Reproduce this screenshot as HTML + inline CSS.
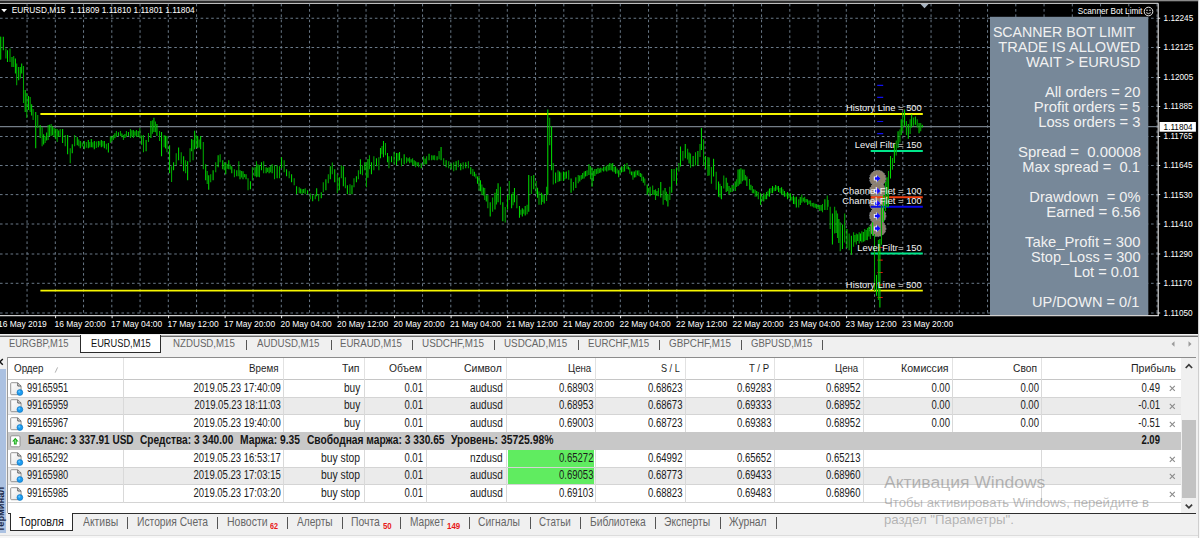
<!DOCTYPE html><html><head><meta charset="utf-8"><title>EURUSD,M15</title><style>
html,body{margin:0;padding:0}
body{width:1200px;height:538px;overflow:hidden;position:relative;background:#f0f0f0;font-family:"Liberation Sans",sans-serif}
.t{position:absolute;white-space:pre;line-height:1;display:block}
.b{position:absolute;display:block}
</style></head><body>
<svg width="1200" height="335" viewBox="0 0 1200 335" style="position:absolute;left:0;top:0;display:block" font-family='"Liberation Sans",sans-serif'>
<rect x="0" y="0" width="1200" height="335" fill="#000"/>
<rect x="0" y="0" width="1198" height="1.3" fill="#8a8a8a"/>
<path d="M0 3.3H1158.2" stroke="#bdbdbd" stroke-width="1.3"/>
<path d="M27.05 3.8V315.6M55.30 3.8V315.6M83.55 3.8V315.6M111.80 3.8V315.6M140.05 3.8V315.6M168.30 3.8V315.6M196.55 3.8V315.6M224.80 3.8V315.6M253.05 3.8V315.6M281.30 3.8V315.6M309.55 3.8V315.6M337.80 3.8V315.6M366.05 3.8V315.6M394.30 3.8V315.6M422.55 3.8V315.6M450.80 3.8V315.6M479.05 3.8V315.6M507.30 3.8V315.6M535.55 3.8V315.6M563.80 3.8V315.6M592.05 3.8V315.6M620.30 3.8V315.6M648.55 3.8V315.6M676.80 3.8V315.6M705.05 3.8V315.6M733.30 3.8V315.6M761.55 3.8V315.6M789.80 3.8V315.6M818.05 3.8V315.6M846.30 3.8V315.6M874.55 3.8V315.6M902.80 3.8V315.6M931.05 3.8V315.6M959.30 3.8V315.6M987.55 3.8V315.6M1015.80 3.8V315.6M1044.05 3.8V315.6M1072.30 3.8V315.6M1100.55 3.8V315.6M1128.80 3.8V315.6M1157.05 3.8V315.6M0 18.25H1158.2M0 47.50H1158.2M0 77.50H1158.2M0 106.50H1158.2M0 136.50H1158.2M0 165.50H1158.2M0 194.60H1158.2M0 224.00H1158.2M0 254.00H1158.2M0 283.30H1158.2M0 313.00H1158.2" stroke="#70808f" stroke-width="0.95" stroke-dasharray="2.6 2.68" fill="none"/>
<path d="M0 126.6H1158.2" stroke="#747e88" stroke-width="1.1"/>
<circle cx="877.7" cy="178.50" r="8.2" fill="#8c7f6e" stroke="#8893a0" stroke-width="0.8" stroke-dasharray="1.7 1.1"/>
<circle cx="877.7" cy="190.95" r="8.2" fill="#8c7f6e" stroke="#8893a0" stroke-width="0.8" stroke-dasharray="1.7 1.1"/>
<circle cx="877.7" cy="203.40" r="8.2" fill="#8c7f6e" stroke="#8893a0" stroke-width="0.8" stroke-dasharray="1.7 1.1"/>
<circle cx="877.7" cy="215.90" r="8.2" fill="#8c7f6e" stroke="#8893a0" stroke-width="0.8" stroke-dasharray="1.7 1.1"/>
<circle cx="877.7" cy="228.40" r="8.2" fill="#8c7f6e" stroke="#8893a0" stroke-width="0.8" stroke-dasharray="1.7 1.1"/>
<path d="M873.8 176.5H876.4V174.5L880.3 178.5L876.4 182.5V180.5H873.8z" fill="#f4f4ff"/>
<path d="M874.9 177.2H877.1V175.2L880.5 178.5L877.1 181.8V179.8H874.9z" fill="#0a0aff"/>
<path d="M873.8 188.9H876.4V186.9L880.3 190.9L876.4 194.9V192.9H873.8z" fill="#f4f4ff"/>
<path d="M874.9 189.7H877.1V187.6L880.5 190.9L877.1 194.3V192.2H874.9z" fill="#0a0aff"/>
<path d="M873.8 201.4H876.4V199.4L880.3 203.4L876.4 207.4V205.4H873.8z" fill="#f4f4ff"/>
<path d="M874.9 202.2H877.1V200.1L880.5 203.4L877.1 206.8V204.7H874.9z" fill="#0a0aff"/>
<path d="M873.8 213.9H876.4V211.9L880.3 215.9L876.4 219.9V217.9H873.8z" fill="#f4f4ff"/>
<path d="M874.9 214.7H877.1V212.6L880.5 215.9L877.1 219.2V217.2H874.9z" fill="#0a0aff"/>
<path d="M873.8 226.4H876.4V224.4L880.3 228.4L876.4 232.4V230.4H873.8z" fill="#f4f4ff"/>
<path d="M874.9 227.2H877.1V225.1L880.5 228.4L877.1 231.8V229.7H874.9z" fill="#0a0aff"/>
<path d="M40.4 114H922.8M40.4 290.6H922.8" stroke="#f5f500" stroke-width="1.8"/>
<path d="M870.7 151H922.8M870.7 253.5H922.8" stroke="#00e68a" stroke-width="2"/>
<path d="M870.7 197.3H922.8" stroke="#f04010" stroke-width="2"/>
<path d="M870.7 206.8H922.8" stroke="#0808e8" stroke-width="2"/>
<path d="M877.2 85.4h6M877.2 97.3h6M877.2 121.5h6M877.2 133.6h6" stroke="#1010f0" stroke-width="1.2"/>
<path d="M877.5 247.5h5.2M877.5 260.2h5.2M877.5 272.5h5.2M877.5 284.8h5.2M877.5 297.5h5.2" stroke="#e01010" stroke-width="1.2"/>
<path d="M0.40 36.8V59.4M3.30 36.8V50.2M7.50 50.2V61.9M12.00 56.9V66.9M15.40 58.5V73.6M18.70 66.9V80.3M21.70 63.5V73.6M25.20 90.0V112.0M28.50 96.0V110.0M31.66 104.3V115.4M35.72 112.0V148.2M40.14 125.1V138.1M43.65 134.2V144.4M46.66 132.4V140.4M49.67 124.8V136.1M52.68 126.2V135.3M55.69 128.8V139.3M58.70 130.4V137.0M62.61 129.1V143.1M67.63 135.1V154.2M72.25 144.2V153.2M77.26 137.1V145.2M80.27 141.1V148.2M84.29 141.1V149.2M88.30 140.1V148.2M91.31 139.1V147.2M94.32 141.1V149.2M98.33 141.1V147.2M101.34 140.1V147.2M104.35 141.1V148.2M108.37 143.1V152.6M111.88 136.6V141.5M114.89 133.2V138.3M118.40 132.2V135.9M121.91 133.6V137.2M124.92 133.9V138.1M128.44 131.9V136.0M131.95 130.2V136.7M134.96 131.3V135.7M138.17 131.0V136.9M141.68 135.6V144.7M146.10 140.1V151.2M150.91 121.1V138.1M153.92 117.7V132.1M156.93 124.1V136.1M161.55 132.1V156.2M165.56 135.7V148.5M169.58 145.2V173.2M173.59 162.2V170.2M178.61 147.6V160.2M183.62 156.2V171.2M187.64 161.2V180.3M191.65 139.1V151.2M194.66 130.7V149.2M197.67 136.1V148.2M200.68 136.1V149.2M205.70 164.2V180.3M208.71 175.3V189.7M213.12 170.2V180.3M218.14 155.2V167.2M222.76 160.2V169.2M225.77 162.2V174.3M228.78 160.2V169.2M231.79 166.2V173.2M236.81 170.2V176.3M240.00 170.2V179.2M243.01 171.2V179.2M246.02 174.2V179.2M250.44 181.2V189.3M255.05 167.2V176.2M257.96 164.6V176.7M261.47 162.2V170.2M266.09 167.2V173.2M269.10 167.2V173.2M272.11 164.2V173.2M277.13 165.2V178.2M281.54 157.2V168.2M286.56 169.2V176.2M291.58 174.2V182.2M296.59 186.3V194.3M300.71 188.5V193.6M303.72 188.9V193.0M307.63 190.3V194.3M312.65 195.3V201.3M316.66 188.3V196.3M321.28 192.3V198.3M325.89 179.2V190.3M330.31 166.2V179.2M334.72 169.2V182.2M339.34 177.2V190.3M343.35 166.2V186.3M347.37 185.3V194.3M351.98 185.3V194.3M356.40 176.2V182.2M360.41 159.2V174.2M364.82 162.2V170.2M367.93 159.0V177.7M371.45 162.2V174.2M376.46 158.2V166.2M380.48 148.1V158.2M383.49 141.1V157.2M387.50 153.1V162.2M391.52 156.2V162.2M396.53 153.1V165.2M399.54 152.1V160.2M404.16 154.2V164.2M408.07 158.2V161.6M411.08 159.3V162.5M414.09 160.2V165.4M417.10 162.3V165.7M421.22 163.2V168.2M425.13 158.6V164.3M429.04 153.7V160.2M433.16 155.4V159.8M437.07 156.2V160.2M441.08 147.1V160.2M446.10 160.2V167.2M451.12 163.2V169.2M456.13 161.2V170.2M460.75 163.2V170.2M465.77 162.2V168.2M470.78 167.2V174.2M474.40 171.8V176.4M477.49 176.6V183.7M480.47 180.3V191.2M483.32 187.5V195.6M486.29 195.2V201.5M490.22 202.3V216.6M494.98 192.8V209.4M498.07 183.3V202.3M502.83 202.3V221.3M507.58 195.1V209.4M511.63 194.0V208.2M514.48 188.0V202.3M519.48 205.9V217.7M522.33 208.2V216.6M525.19 205.9V215.4M528.75 174.9V211.8M533.75 174.9V189.2M537.55 187.8V197.7M541.36 192.8V204.7M544.22 195.1V203.5M547.78 109.5V195.1M551.59 126.2V170.2M555.63 172.5V183.3M559.44 171.5V181.3M563.48 171.4V180.9M566.34 171.4V178.5M571.09 178.5V192.8M575.85 177.3V188.0M579.78 175.6V181.4M582.75 173.1V178.8M585.60 171.0V176.6M588.93 164.2V174.9M592.03 167.8V186.8M594.88 169.0V176.1M597.97 167.8V173.7M600.83 167.8V172.5M603.68 166.6V171.4M606.77 165.4V171.4M609.87 163.0V170.2M612.72 163.0V171.4M615.58 166.6V173.7M618.67 170.2V177.3M621.52 166.6V172.5M624.61 164.2V171.4M628.42 166.4V169.6M631.39 171.4V175.2M634.37 171.4V177.6M637.34 170.5V175.2M640.31 173.0V177.0M643.29 176.8V182.8M647.21 184.4V195.1M650.07 186.8V196.3M654.11 190.0V195.1M656.96 190.9V196.0M660.77 182.1V197.5M665.05 188.0V199.9M667.91 194.0V206.6M671.71 169.0V192.8M676.47 167.8V184.4M680.51 146.4V166.6M685.27 144.0V158.3M689.08 152.5V163.5M693.12 155.9V166.6M697.88 151.1V165.4M701.45 128.1V150.0M705.49 155.9V169.0M709.04 157.6V175.4M713.56 158.8V176.6M718.55 181.4V196.8M721.41 186.1V199.2M726.17 177.8V192.1M729.02 186.1V194.4M732.11 184.9V192.1M735.20 181.4V190.9M738.06 169.5V186.1M740.91 168.3V183.7M744.01 169.5V180.2M746.86 176.6V186.1M750.90 184.8V190.2M753.76 189.3V193.3M756.73 191.1V196.6M760.66 193.3V205.1M763.75 193.3V201.6M766.60 192.1V199.2M769.46 188.5V196.8M772.55 186.1V193.3M775.64 184.9V190.9M778.50 186.1V192.1M781.59 187.3V194.4M784.44 190.9V196.8M787.54 192.1V199.2M790.39 193.3V200.4M793.48 195.6V204.0M796.34 196.8V207.5M800.26 197.1V205.1M803.24 197.7V201.4M806.09 199.0V202.3M809.06 200.6V204.2M812.16 202.9V206.6M815.13 203.7V207.7M818.10 204.9V209.0M821.08 205.1V210.8M824.88 199.2V209.9M827.96 200.0V206.7M832.42 213.4V244.6M836.10 210.4V232.9M838.89 219.0V243.1M842.46 224.5V249.1M846.92 229.0V248.0M851.38 235.7V254.7M854.95 235.1V242.2M857.74 234.3V241.0M860.53 233.5V241.2M863.31 232.0V241.8M866.10 230.1V240.0M868.89 226.8V236.5M872.57 222.3V235.7M876.50 275.0V295.7M879.90 239.0V307.4M883.50 195.0V222.0M887.00 177.2V207.2M890.50 156.0V178.4M894.35 144.3V162.9M898.07 131.3V148.1M901.23 119.3V135.1M904.57 109.6V125.8M908.29 123.9V138.8M911.64 114.6V127.6M915.35 116.5V124.8M919.07 123.0V133.2M922.23 124.8V127.6" stroke="#00d800" stroke-width="1.05" fill="none"/>
<path d="M0.80 36.8V59.4M5.90 48.5V58.5M10.00 48.5V61.9M13.70 56.0V66.9M16.70 63.5V85.3M20.40 66.9V78.6M23.50 66.0V103.0M26.80 93.0V118.0M30.20 97.0V112.0M33.11 109.0V120.1M37.73 115.1V128.1M42.14 127.1V146.2M45.15 136.1V143.1M48.16 125.1V140.1M51.17 124.1V136.1M54.18 128.1V137.1M57.19 129.1V142.1M60.20 129.1V137.1M65.22 135.1V146.2M70.24 148.2V163.2M74.65 135.1V146.2M78.77 139.4V146.2M82.28 142.6V146.5M86.29 142.0V147.7M89.81 142.0V147.5M92.82 142.2V147.5M96.33 141.4V147.9M99.84 141.2V145.6M102.85 141.0V146.4M106.36 143.7V149.5M110.38 136.1V143.1M113.39 135.1V140.1M116.40 131.1V137.1M120.41 131.1V136.1M123.42 135.1V140.1M126.43 131.1V137.1M130.44 129.1V138.1M133.45 130.1V138.1M136.46 130.1V137.1M139.88 128.1V138.1M143.49 135.1V152.2M148.50 133.1V142.1M152.42 120.2V133.7M155.43 121.5V132.2M159.54 131.1V141.1M164.16 135.1V147.2M166.97 136.1V152.2M171.58 166.2V181.9M176.20 153.2V165.2M181.22 152.2V164.2M185.63 160.2V173.2M190.05 148.2V162.2M193.06 140.1V160.2M196.17 134.8V147.6M199.18 139.4V147.5M203.29 142.1V169.2M207.20 171.0V183.9M210.72 174.3V182.3M215.73 162.2V172.2M220.15 154.2V162.2M224.26 163.0V170.3M227.27 163.9V168.8M230.28 164.4V169.6M234.40 169.2V177.3M238.81 161.2V176.3M241.51 170.9V177.4M244.52 174.0V177.3M248.03 178.2V190.3M252.44 167.2V180.2M256.46 161.2V177.2M259.47 165.2V177.2M263.68 161.2V173.2M267.59 167.9V172.0M270.60 165.7V172.2M274.52 165.2V179.2M279.53 166.2V178.2M284.15 160.2V172.2M289.17 171.2V178.2M294.18 178.2V185.3M299.20 187.3V193.3M302.21 189.3V194.3M305.22 188.3V194.3M310.24 193.3V199.3M315.26 194.3V199.3M318.67 194.3V201.3M323.28 182.2V192.3M328.30 174.2V183.2M332.31 162.6V174.2M337.33 174.2V193.3M341.34 165.2V178.2M345.36 177.2V188.3M349.97 184.3V194.3M353.99 178.2V187.3M358.40 170.2V179.2M362.42 165.2V175.2M366.43 162.2V187.3M369.44 155.2V169.2M373.86 156.2V170.2M378.87 157.2V170.2M381.98 146.1V154.3M385.49 143.1V155.2M388.91 156.2V168.2M394.12 152.1V164.2M398.04 152.9V161.3M401.55 158.2V166.2M406.57 157.2V163.2M409.58 157.2V163.2M412.59 158.2V165.2M415.60 161.2V167.2M418.61 162.2V167.2M423.62 156.2V165.2M426.63 156.2V164.2M431.65 155.2V160.2M434.66 155.2V160.2M439.08 151.1V159.2M443.69 158.2V165.2M448.71 161.2V168.2M453.73 162.2V171.2M458.34 160.2V167.2M463.16 162.2V169.2M468.38 161.2V168.2M472.85 169.0V176.1M475.95 173.7V178.5M479.04 176.1V190.4M481.89 184.4V195.1M484.75 188.0V199.9M487.84 195.1V208.2M492.60 197.5V211.8M496.52 189.1V204.5M500.45 186.8V204.7M505.20 207.0V222.5M509.25 180.9V199.9M513.05 192.1V205.2M516.86 195.1V208.2M520.90 209.8V214.8M523.76 209.4V213.8M527.09 204.7V214.2M531.37 176.1V194.0M536.13 180.9V194.0M538.98 191.6V204.7M542.79 194.3V202.1M546.59 186.8V201.1M549.69 117.8V145.2M553.25 163.0V184.4M558.01 170.2V182.1M560.87 172.5V180.9M564.91 171.9V179.3M568.72 170.2V179.7M573.47 182.1V190.4M578.23 174.9V183.3M581.32 174.9V179.7M584.18 171.4V178.5M587.03 170.2V176.1M590.48 166.1V179.3M593.45 170.8V180.9M596.43 168.9V174.2M599.40 168.4V172.9M602.25 168.4V170.5M605.23 166.8V170.6M608.32 164.4V170.6M611.29 163.8V170.2M614.15 166.7V172.2M617.12 168.4V173.5M620.10 169.4V174.6M623.07 166.5V171.9M626.99 163.0V169.0M629.85 167.8V173.7M632.94 171.4V179.7M635.79 170.2V177.3M638.89 170.2V176.1M641.74 173.7V180.9M644.83 178.5V185.6M648.64 188.1V192.8M652.68 185.6V195.1M655.54 189.2V199.9M658.39 188.0V196.3M663.15 190.4V204.7M666.48 191.8V201.3M669.81 186.8V199.9M674.09 169.0V180.9M678.85 163.0V171.4M682.89 151.1V160.7M687.65 148.8V159.5M690.50 153.5V167.8M695.50 152.3V165.4M700.02 144.0V157.1M703.59 139.2V165.4M707.87 157.1V176.1M711.42 167.1V183.7M716.18 171.8V189.7M719.98 183.8V197.5M723.79 175.4V188.5M727.59 182.8V190.9M730.57 187.7V192.2M733.66 185.5V189.0M736.63 179.2V187.1M739.49 169.3V184.5M742.46 169.6V181.2M745.43 174.9V180.4M749.48 179.0V189.7M752.33 186.1V193.3M755.19 189.7V196.8M758.28 192.1V199.2M762.20 196.0V201.0M765.18 194.4V199.3M768.03 190.7V196.2M771.00 188.1V193.2M774.10 187.4V191.3M777.07 186.2V189.8M780.04 188.1V192.9M783.02 189.3V195.3M785.99 193.2V196.4M788.96 193.0V198.0M791.94 196.7V200.6M794.91 197.2V204.2M798.72 199.2V207.5M801.81 194.4V202.8M804.66 196.8V202.8M807.52 199.2V205.1M810.61 200.4V206.3M813.70 202.8V207.5M816.56 204.0V208.7M819.65 205.1V211.1M822.50 204.0V212.3M827.26 195.6V209.9M830.19 206.7V229.0M834.65 206.7V233.5M837.55 213.4V237.9M840.23 222.3V251.3M844.69 213.4V242.4M849.15 233.5V250.2M853.61 232.3V246.8M856.29 233.5V244.6M859.19 232.3V243.5M861.86 231.2V242.4M864.76 229.0V241.3M867.44 227.9V240.2M870.34 225.7V239.0M874.50 234.0V290.7M878.40 240.0V300.0M881.50 205.0V244.8M885.50 182.0V211.0M888.50 171.0V207.0M892.50 158.0V169.7M896.21 140.6V155.5M899.93 129.5V142.5M902.71 111.8V131.3M906.43 121.1V135.1M910.15 119.3V134.1M913.49 117.4V125.8M917.21 119.3V127.6M920.74 123.0V131.3" stroke="#00a800" stroke-width="1.05" fill="none"/>
<text x="921.80" y="110.90" font-size="9.4" text-anchor="end" fill="#f4f4f4" >History Line = 500</text>
<text x="921.80" y="148.00" font-size="9.4" text-anchor="end" fill="#f4f4f4" >Level Filtr = 150</text>
<text x="921.80" y="194.40" font-size="9.4" text-anchor="end" fill="#f4f4f4" >Channel Flet = 100</text>
<text x="921.80" y="203.50" font-size="9.4" text-anchor="end" fill="#f4f4f4" >Channel Flet = 100</text>
<text x="921.70" y="250.90" font-size="9.4" text-anchor="end" fill="#f4f4f4" >Level Filtr= 150</text>
<text x="921.70" y="287.70" font-size="9.4" text-anchor="end" fill="#f4f4f4" >History Line = 500</text>
<rect x="990" y="16.8" width="158.3" height="299" fill="#778899"/>
<text x="992.9" y="36.80" font-size="14.1" textLength="142.4" lengthAdjust="spacingAndGlyphs" fill="#f1f1f1" xml:space="preserve">SCANNER BOT LIMIT</text>
<text x="998.3" y="51.83" font-size="14.1" textLength="142.0" lengthAdjust="spacingAndGlyphs" fill="#f1f1f1" xml:space="preserve">TRADE IS ALLOWED</text>
<text x="1025.9" y="66.86" font-size="14.1" textLength="114.4" lengthAdjust="spacingAndGlyphs" fill="#f1f1f1" xml:space="preserve">WAIT &gt; EURUSD</text>
<text x="1044.9" y="96.92" font-size="14.1" textLength="95.5" lengthAdjust="spacingAndGlyphs" fill="#f1f1f1" xml:space="preserve">All orders = 20</text>
<text x="1033.8" y="111.95" font-size="14.1" textLength="106.6" lengthAdjust="spacingAndGlyphs" fill="#f1f1f1" xml:space="preserve">Profit orders = 5</text>
<text x="1038.2" y="126.98" font-size="14.1" textLength="102.2" lengthAdjust="spacingAndGlyphs" fill="#f1f1f1" xml:space="preserve">Loss orders = 3</text>
<text x="1018.0" y="157.04" font-size="14.1" textLength="123.1" lengthAdjust="spacingAndGlyphs" fill="#f1f1f1" xml:space="preserve">Spread =  0.00008</text>
<text x="1022.2" y="172.07" font-size="14.1" textLength="117.6" lengthAdjust="spacingAndGlyphs" fill="#f1f1f1" xml:space="preserve">Max spread =  0.1</text>
<text x="1029.3" y="202.13" font-size="14.1" textLength="111.2" lengthAdjust="spacingAndGlyphs" fill="#f1f1f1" xml:space="preserve">Drawdown  = 0%</text>
<text x="1046.2" y="217.16" font-size="14.1" textLength="94.3" lengthAdjust="spacingAndGlyphs" fill="#f1f1f1" xml:space="preserve">Earned = 6.56</text>
<text x="1025.1" y="247.22" font-size="14.1" textLength="115.4" lengthAdjust="spacingAndGlyphs" fill="#f1f1f1" xml:space="preserve">Take_Profit = 300</text>
<text x="1031.1" y="262.25" font-size="14.1" textLength="109.4" lengthAdjust="spacingAndGlyphs" fill="#f1f1f1" xml:space="preserve">Stop_Loss = 300</text>
<text x="1073.8" y="277.28" font-size="14.1" textLength="65.5" lengthAdjust="spacingAndGlyphs" fill="#f1f1f1" xml:space="preserve">Lot = 0.01</text>
<text x="1032.1" y="307.34" font-size="14.1" textLength="107.2" lengthAdjust="spacingAndGlyphs" fill="#f1f1f1" xml:space="preserve">UP/DOWN = 0/1</text>
<path d="M1158.2 3.3V316.1" stroke="#e8e8e8" stroke-width="1.1"/>
<path d="M0 315.6H1158.7" stroke="#cfcfcf" stroke-width="1.1"/>
<path d="M1158.2 18.25h2M1158.2 47.50h2M1158.2 77.50h2M1158.2 106.50h2M1158.2 136.50h2M1158.2 165.50h2M1158.2 194.60h2M1158.2 224.00h2M1158.2 254.00h2M1158.2 283.30h2M1158.2 313.00h2" stroke="#e8e8e8" stroke-width="1"/>
<text x="-2.00" y="326.90" font-size="8.45" text-anchor="start" fill="#fff" >16 May 2019</text>
<text x="54.50" y="326.90" font-size="8.45" text-anchor="start" fill="#fff" >16 May 20:00</text>
<text x="111.00" y="326.90" font-size="8.45" text-anchor="start" fill="#fff" >17 May 04:00</text>
<text x="167.50" y="326.90" font-size="8.45" text-anchor="start" fill="#fff" >17 May 12:00</text>
<text x="224.00" y="326.90" font-size="8.45" text-anchor="start" fill="#fff" >17 May 20:00</text>
<text x="280.50" y="326.90" font-size="8.45" text-anchor="start" fill="#fff" >20 May 04:00</text>
<text x="337.00" y="326.90" font-size="8.45" text-anchor="start" fill="#fff" >20 May 12:00</text>
<text x="393.50" y="326.90" font-size="8.45" text-anchor="start" fill="#fff" >20 May 20:00</text>
<text x="450.00" y="326.90" font-size="8.45" text-anchor="start" fill="#fff" >21 May 04:00</text>
<text x="506.50" y="326.90" font-size="8.45" text-anchor="start" fill="#fff" >21 May 12:00</text>
<text x="563.00" y="326.90" font-size="8.45" text-anchor="start" fill="#fff" >21 May 20:00</text>
<text x="619.50" y="326.90" font-size="8.45" text-anchor="start" fill="#fff" >22 May 04:00</text>
<text x="676.00" y="326.90" font-size="8.45" text-anchor="start" fill="#fff" >22 May 12:00</text>
<text x="732.50" y="326.90" font-size="8.45" text-anchor="start" fill="#fff" >22 May 20:00</text>
<text x="789.00" y="326.90" font-size="8.45" text-anchor="start" fill="#fff" >23 May 04:00</text>
<text x="845.50" y="326.90" font-size="8.45" text-anchor="start" fill="#fff" >23 May 12:00</text>
<text x="902.00" y="326.90" font-size="8.45" text-anchor="start" fill="#fff" >23 May 20:00</text>
<path d="M-0.90 315.6v2.6M55.60 315.6v2.6M112.10 315.6v2.6M168.60 315.6v2.6M225.10 315.6v2.6M281.60 315.6v2.6M338.10 315.6v2.6M394.60 315.6v2.6M451.10 315.6v2.6M507.60 315.6v2.6M564.10 315.6v2.6M620.60 315.6v2.6M677.10 315.6v2.6M733.60 315.6v2.6M790.10 315.6v2.6M846.60 315.6v2.6M903.10 315.6v2.6" stroke="#e8e8e8" stroke-width="1"/>
<text x="1163.60" y="21.20" font-size="8.2" text-anchor="start" fill="#fff" >1.12245</text>
<text x="1163.60" y="50.45" font-size="8.2" text-anchor="start" fill="#fff" >1.12125</text>
<text x="1163.60" y="80.45" font-size="8.2" text-anchor="start" fill="#fff" >1.12005</text>
<text x="1163.60" y="109.45" font-size="8.2" text-anchor="start" fill="#fff" >1.11885</text>
<text x="1163.60" y="139.45" font-size="8.2" text-anchor="start" fill="#fff" >1.11765</text>
<text x="1163.60" y="168.45" font-size="8.2" text-anchor="start" fill="#fff" >1.11645</text>
<text x="1163.60" y="197.55" font-size="8.2" text-anchor="start" fill="#fff" >1.11530</text>
<text x="1163.60" y="226.95" font-size="8.2" text-anchor="start" fill="#fff" >1.11410</text>
<text x="1163.60" y="256.95" font-size="8.2" text-anchor="start" fill="#fff" >1.11290</text>
<text x="1163.60" y="286.25" font-size="8.2" text-anchor="start" fill="#fff" >1.11170</text>
<text x="1163.60" y="315.95" font-size="8.2" text-anchor="start" fill="#fff" >1.11050</text>
<rect x="1159.5" y="122" width="36.4" height="9.7" fill="#fff"/>
<text x="1163.60" y="129.60" font-size="8.2" text-anchor="start" fill="#000" >1.11804</text>
<path d="M1.2 8.9h5.8l-2.9 3.4z" fill="#fff"/>
<text x="11.8" y="12.7" font-size="8.32" fill="#fff" xml:space="preserve">EURUSD,M15  1.11809 1.11810 1.11801 1.11804</text>
<text x="1142.40" y="13.70" font-size="8.2" text-anchor="end" fill="#fff" >Scanner Bot Limit</text>
<circle cx="1148.5" cy="11.5" r="4.3" fill="none" stroke="#fff" stroke-width="0.9"/>
<circle cx="1147" cy="10.3" r="0.7" fill="#fff"/><circle cx="1150" cy="10.3" r="0.7" fill="#fff"/>
<path d="M1146.2 12.6q2.3 2.2 4.6 0" stroke="#fff" stroke-width="0.8" fill="none"/>
<path d="M920.5 4h8l-4 4.2z" fill="#a8b4c0"/>
</svg>
<svg width="0" height="0" style="position:absolute"><defs><linearGradient id="pg" x1="0" y1="0" x2="1" y2="1"><stop offset="0" stop-color="#fff"/><stop offset="1" stop-color="#e2e2e2"/></linearGradient></defs></svg>
<div class="b" style="left:0;top:333.8px;width:1200px;height:1.4px;background:#f2f2f2"></div>
<div class="b" style="left:0;top:335px;width:1200px;height:1px;background:#bcbcbc"></div>
<div class="b" style="left:0;top:336px;width:1200px;height:1px;background:#6c6c6c"></div>
<div class="b" style="left:0;top:337px;width:1200px;height:20.6px;background:#f0f0f0"></div>
<div class="b" style="left:80.2px;top:335px;width:79.2px;height:16.6px;background:#fff;border:1.3px solid #2c2c2c;border-top:none;box-sizing:content-box"></div>
<span class="t" style="left:9.30px;top:337.10px;font-size:11.7px;color:#666;font-weight:400;transform-origin:0 0;transform:scaleX(0.8044);">EURGBP,M15</span>
<span class="t" style="left:90.80px;top:337.10px;font-size:11.7px;color:#111;font-weight:400;transform-origin:0 0;transform:scaleX(0.7924);">EURUSD,M15</span>
<span class="t" style="left:172.80px;top:337.10px;font-size:11.7px;color:#666;font-weight:400;transform-origin:0 0;transform:scaleX(0.8288);">NZDUSD,M15</span>
<span class="t" style="left:257.30px;top:337.10px;font-size:11.7px;color:#666;font-weight:400;transform-origin:0 0;transform:scaleX(0.8282);">AUDUSD,M15</span>
<span class="t" style="left:340.30px;top:337.10px;font-size:11.7px;color:#666;font-weight:400;transform-origin:0 0;transform:scaleX(0.8216);">EURAUD,M15</span>
<span class="t" style="left:421.50px;top:337.10px;font-size:11.7px;color:#666;font-weight:400;transform-origin:0 0;transform:scaleX(0.8448);">USDCHF,M15</span>
<span class="t" style="left:504.30px;top:337.10px;font-size:11.7px;color:#666;font-weight:400;transform-origin:0 0;transform:scaleX(0.8401);">USDCAD,M15</span>
<span class="t" style="left:588.20px;top:337.10px;font-size:11.7px;color:#666;font-weight:400;transform-origin:0 0;transform:scaleX(0.8325);">EURCHF,M15</span>
<span class="t" style="left:669.00px;top:337.10px;font-size:11.7px;color:#666;font-weight:400;transform-origin:0 0;transform:scaleX(0.8448);">GBPCHF,M15</span>
<span class="t" style="left:750.70px;top:337.10px;font-size:11.7px;color:#666;font-weight:400;transform-origin:0 0;transform:scaleX(0.8149);">GBPUSD,M15</span>
<div class="b" style="left:246.25px;top:339.5px;width:1px;height:10.5px;background:#555"></div>
<div class="b" style="left:330.75px;top:339.5px;width:1px;height:10.5px;background:#555"></div>
<div class="b" style="left:412.00px;top:339.5px;width:1px;height:10.5px;background:#555"></div>
<div class="b" style="left:493.60px;top:339.5px;width:1px;height:10.5px;background:#555"></div>
<div class="b" style="left:578.20px;top:339.5px;width:1px;height:10.5px;background:#555"></div>
<div class="b" style="left:659.30px;top:339.5px;width:1px;height:10.5px;background:#555"></div>
<div class="b" style="left:741.00px;top:339.5px;width:1px;height:10.5px;background:#555"></div>
<div class="b" style="left:821.80px;top:339.5px;width:1px;height:10.5px;background:#555"></div>
<svg class="b" style="left:1165px;top:338px" width="32" height="12"><path d="M9.5 3.2v5.6l-3-2.8z" fill="#9a9a9a"/><path d="M23.5 3.2v5.6l3-2.8z" fill="#9a9a9a"/></svg>
<div class="b" style="left:0;top:357px;width:6px;height:12.5px;background:#f0f0f0"></div>
<div class="b" style="left:0;top:369.4px;width:6.1px;height:163.4px;background:#abc1e1"></div>
<svg class="b" style="left:0;top:356px" width="6" height="12"><path d="M-3 2.9L2.8 8.7M-3 8.7L2.8 2.9" stroke="#111" stroke-width="1.4" fill="none"/></svg>
<span class="t" style="left:-2.6px;top:531.6px;font-size:9.3px;font-weight:700;color:#1c2a4a;transform-origin:0 0;transform:rotate(-90deg)">Терминал</span>
<div class="b" style="left:7.5px;top:357.4px;width:1188.8px;height:155.9px;background:#fff"></div>
<div class="b" style="left:7.5px;top:357.0px;width:1188.8px;height:1px;background:#8c8c8c"></div>
<div class="b" style="left:7.1px;top:357.4px;width:1px;height:155.9px;background:#9a9a9a"></div>
<div class="b" style="left:8.1px;top:379.4px;width:1173.2px;height:17.6px;background:#fff"></div>
<div class="b" style="left:8.1px;top:397.0px;width:1173.2px;height:17.5px;background:#ebebeb"></div>
<div class="b" style="left:8.1px;top:414.5px;width:1173.2px;height:17.5px;background:#fff"></div>
<div class="b" style="left:8.1px;top:432.0px;width:1173.2px;height:17.5px;background:#c8c8c8"></div>
<div class="b" style="left:8.1px;top:449.5px;width:1173.2px;height:17.5px;background:#fff"></div>
<div class="b" style="left:8.1px;top:467.0px;width:1173.2px;height:17.9px;background:#ebebeb"></div>
<div class="b" style="left:8.1px;top:484.9px;width:1173.2px;height:17.6px;background:#fff"></div>
<div class="b" style="left:508.2px;top:450.1px;width:85.6px;height:16.7px;background:#60ec60"></div>
<div class="b" style="left:508.2px;top:467.6px;width:85.6px;height:17.1px;background:#60ec60"></div>
<div class="b" style="left:8.1px;top:378.9px;width:1173.2px;height:1px;background:#c6c6c6"></div>
<div class="b" style="left:8.1px;top:396.5px;width:1173.2px;height:1px;background:#d4d4d4"></div>
<div class="b" style="left:8.1px;top:414.0px;width:1173.2px;height:1px;background:#d4d4d4"></div>
<div class="b" style="left:8.1px;top:466.5px;width:1173.2px;height:1px;background:#d4d4d4"></div>
<div class="b" style="left:8.1px;top:484.4px;width:1173.2px;height:1px;background:#d4d4d4"></div>
<div class="b" style="left:8.1px;top:502.0px;width:1173.2px;height:1px;background:#d4d4d4"></div>
<div class="b" style="left:122.50px;top:358.0px;width:1px;height:21.4px;background:#e2e2e2"></div>
<div class="b" style="left:122.50px;top:379.4px;width:1px;height:52.6px;background:#d9d9d9"></div>
<div class="b" style="left:122.50px;top:449.5px;width:1px;height:53.0px;background:#d9d9d9"></div>
<div class="b" style="left:282.75px;top:358.0px;width:1px;height:21.4px;background:#e2e2e2"></div>
<div class="b" style="left:282.75px;top:379.4px;width:1px;height:52.6px;background:#d9d9d9"></div>
<div class="b" style="left:282.75px;top:449.5px;width:1px;height:53.0px;background:#d9d9d9"></div>
<div class="b" style="left:363.75px;top:358.0px;width:1px;height:21.4px;background:#e2e2e2"></div>
<div class="b" style="left:363.75px;top:379.4px;width:1px;height:52.6px;background:#d9d9d9"></div>
<div class="b" style="left:363.75px;top:449.5px;width:1px;height:53.0px;background:#d9d9d9"></div>
<div class="b" style="left:425.75px;top:358.0px;width:1px;height:21.4px;background:#e2e2e2"></div>
<div class="b" style="left:425.75px;top:379.4px;width:1px;height:52.6px;background:#d9d9d9"></div>
<div class="b" style="left:425.75px;top:449.5px;width:1px;height:53.0px;background:#d9d9d9"></div>
<div class="b" style="left:505.80px;top:358.0px;width:1px;height:21.4px;background:#e2e2e2"></div>
<div class="b" style="left:505.80px;top:379.4px;width:1px;height:52.6px;background:#d9d9d9"></div>
<div class="b" style="left:505.80px;top:449.5px;width:1px;height:53.0px;background:#d9d9d9"></div>
<div class="b" style="left:595.25px;top:358.0px;width:1px;height:21.4px;background:#e2e2e2"></div>
<div class="b" style="left:595.25px;top:379.4px;width:1px;height:52.6px;background:#d9d9d9"></div>
<div class="b" style="left:595.25px;top:449.5px;width:1px;height:53.0px;background:#d9d9d9"></div>
<div class="b" style="left:684.50px;top:358.0px;width:1px;height:21.4px;background:#e2e2e2"></div>
<div class="b" style="left:684.50px;top:379.4px;width:1px;height:52.6px;background:#d9d9d9"></div>
<div class="b" style="left:684.50px;top:449.5px;width:1px;height:53.0px;background:#d9d9d9"></div>
<div class="b" style="left:773.75px;top:358.0px;width:1px;height:21.4px;background:#e2e2e2"></div>
<div class="b" style="left:773.75px;top:379.4px;width:1px;height:52.6px;background:#d9d9d9"></div>
<div class="b" style="left:773.75px;top:449.5px;width:1px;height:53.0px;background:#d9d9d9"></div>
<div class="b" style="left:863.20px;top:358.0px;width:1px;height:21.4px;background:#e2e2e2"></div>
<div class="b" style="left:863.20px;top:379.4px;width:1px;height:52.6px;background:#d9d9d9"></div>
<div class="b" style="left:863.20px;top:449.5px;width:1px;height:53.0px;background:#d9d9d9"></div>
<div class="b" style="left:952.20px;top:358.0px;width:1px;height:21.4px;background:#e2e2e2"></div>
<div class="b" style="left:952.20px;top:379.4px;width:1px;height:52.6px;background:#d9d9d9"></div>
<div class="b" style="left:1041.40px;top:358.0px;width:1px;height:21.4px;background:#e2e2e2"></div>
<div class="b" style="left:1041.40px;top:379.4px;width:1px;height:52.6px;background:#d9d9d9"></div>
<div class="b" style="left:1041.40px;top:449.5px;width:1px;height:53.0px;background:#d9d9d9"></div>
<div class="b" style="left:1180.80px;top:358.0px;width:1px;height:21.4px;background:#e2e2e2"></div>
<span class="t" style="left:13.90px;top:362.51px;font-size:11.8px;color:#1e1e1e;font-weight:400;transform-origin:0 0;transform:scaleX(0.8314);">Ордер</span>
<svg class="b" style="left:53px;top:365px" width="8" height="10"><path d="M2.2 7.6L4.6 2.4" stroke="#9a9a9a" stroke-width="0.8"/></svg>
<span class="t" style="left:249.05px;top:362.51px;font-size:11.8px;color:#1e1e1e;font-weight:400;transform-origin:0 0;transform:scaleX(0.8310);">Время</span>
<span class="t" style="left:341.55px;top:362.51px;font-size:11.8px;color:#1e1e1e;font-weight:400;transform-origin:0 0;transform:scaleX(0.8896);">Тип</span>
<span class="t" style="left:389.05px;top:362.51px;font-size:11.8px;color:#1e1e1e;font-weight:400;transform-origin:0 0;transform:scaleX(0.8712);">Объем</span>
<span class="t" style="left:464.05px;top:362.51px;font-size:11.8px;color:#1e1e1e;font-weight:400;transform-origin:0 0;transform:scaleX(0.8873);">Символ</span>
<span class="t" style="left:567.80px;top:362.51px;font-size:11.8px;color:#1e1e1e;font-weight:400;transform-origin:0 0;transform:scaleX(0.8194);">Цена</span>
<span class="t" style="left:661.05px;top:362.51px;font-size:11.8px;color:#1e1e1e;font-weight:400;transform-origin:0 0;transform:scaleX(0.7727);">S / L</span>
<span class="t" style="left:749.05px;top:362.51px;font-size:11.8px;color:#1e1e1e;font-weight:400;transform-origin:0 0;transform:scaleX(0.8125);">T / P</span>
<span class="t" style="left:835.30px;top:362.51px;font-size:11.8px;color:#1e1e1e;font-weight:400;transform-origin:0 0;transform:scaleX(0.8194);">Цена</span>
<span class="t" style="left:900.50px;top:362.51px;font-size:11.8px;color:#1e1e1e;font-weight:400;transform-origin:0 0;transform:scaleX(0.8994);">Комиссия</span>
<span class="t" style="left:1013.05px;top:362.51px;font-size:11.8px;color:#1e1e1e;font-weight:400;transform-origin:0 0;transform:scaleX(0.8675);">Своп</span>
<span class="t" style="left:1130.90px;top:362.51px;font-size:11.8px;color:#1e1e1e;font-weight:400;transform-origin:0 0;transform:scaleX(0.8957);">Прибыль</span>
<svg class="b" style="left:10px;top:381.5px" width="14" height="15" viewBox="0 0 14 15"><path d="M1.6 0.7h6.2l3.3 3.3v7.8a0.9 0.9 0 0 1-0.9 0.9h-8.6a0.9 0.9 0 0 1-0.9-0.9v-10.2a0.9 0.9 0 0 1 0.9-0.9z" fill="url(#pg)" stroke="#8a8a8a" stroke-width="0.9"/><path d="M7.8 0.9v3.1h3.2" fill="none" stroke="#4a4a4a" stroke-width="0.9"/><circle cx="9.9" cy="10.5" r="2.9" fill="#1b9bf0" stroke="#0b6fb8" stroke-width="0.6"/><circle cx="9.3" cy="9.7" r="1.1" fill="#62c4ff"/></svg>
<span class="t" style="left:27.30px;top:381.89px;font-size:12.3px;color:#1c1c1c;font-weight:400;transform-origin:0 0;transform:scaleX(0.7529);">99165951</span>
<span class="t" style="right:919.50px;top:381.89px;font-size:12.3px;color:#1c1c1c;font-weight:400;transform-origin:100% 0;transform:scaleX(0.7740);">2019.05.23 17:40:09</span>
<span class="t" style="left:344.05px;top:381.89px;font-size:12.3px;color:#1c1c1c;font-weight:400;transform-origin:0 0;transform:scaleX(0.8195);">buy</span>
<span class="t" style="right:777.00px;top:381.89px;font-size:12.3px;color:#1c1c1c;font-weight:400;transform-origin:100% 0;transform:scaleX(0.7740);">0.01</span>
<span class="t" style="left:470.30px;top:381.89px;font-size:12.3px;color:#1c1c1c;font-weight:400;transform-origin:0 0;transform:scaleX(0.8118);">audusd</span>
<span class="t" style="right:607.00px;top:381.89px;font-size:12.3px;color:#1c1c1c;font-weight:400;transform-origin:100% 0;transform:scaleX(0.7740);">0.68903</span>
<span class="t" style="right:517.50px;top:381.89px;font-size:12.3px;color:#1c1c1c;font-weight:400;transform-origin:100% 0;transform:scaleX(0.7740);">0.68623</span>
<span class="t" style="right:428.25px;top:381.89px;font-size:12.3px;color:#1c1c1c;font-weight:400;transform-origin:100% 0;transform:scaleX(0.7740);">0.69283</span>
<span class="t" style="right:339.25px;top:381.89px;font-size:12.3px;color:#1c1c1c;font-weight:400;transform-origin:100% 0;transform:scaleX(0.7740);">0.68952</span>
<span class="t" style="right:250.25px;top:381.89px;font-size:12.3px;color:#1c1c1c;font-weight:400;transform-origin:100% 0;transform:scaleX(0.7740);">0.00</span>
<span class="t" style="right:161.00px;top:381.89px;font-size:12.3px;color:#1c1c1c;font-weight:400;transform-origin:100% 0;transform:scaleX(0.7740);">0.00</span>
<span class="t" style="right:40.25px;top:381.89px;font-size:12.3px;color:#1c1c1c;font-weight:400;transform-origin:100% 0;transform:scaleX(0.7740);">0.49</span>
<svg class="b" style="left:1167.5px;top:384.4px" width="9" height="9"><path d="M1.8 1.8l5 5M6.8 1.8l-5 5" stroke="#8a8a8a" stroke-width="1.1"/></svg>
<svg class="b" style="left:10px;top:399.1px" width="14" height="15" viewBox="0 0 14 15"><path d="M1.6 0.7h6.2l3.3 3.3v7.8a0.9 0.9 0 0 1-0.9 0.9h-8.6a0.9 0.9 0 0 1-0.9-0.9v-10.2a0.9 0.9 0 0 1 0.9-0.9z" fill="url(#pg)" stroke="#8a8a8a" stroke-width="0.9"/><path d="M7.8 0.9v3.1h3.2" fill="none" stroke="#4a4a4a" stroke-width="0.9"/><circle cx="9.9" cy="10.5" r="2.9" fill="#1b9bf0" stroke="#0b6fb8" stroke-width="0.6"/><circle cx="9.3" cy="9.7" r="1.1" fill="#62c4ff"/></svg>
<span class="t" style="left:27.30px;top:399.49px;font-size:12.3px;color:#1c1c1c;font-weight:400;transform-origin:0 0;transform:scaleX(0.7529);">99165959</span>
<span class="t" style="right:919.50px;top:399.49px;font-size:12.3px;color:#1c1c1c;font-weight:400;transform-origin:100% 0;transform:scaleX(0.7740);">2019.05.23 18:11:03</span>
<span class="t" style="left:344.05px;top:399.49px;font-size:12.3px;color:#1c1c1c;font-weight:400;transform-origin:0 0;transform:scaleX(0.8195);">buy</span>
<span class="t" style="right:777.00px;top:399.49px;font-size:12.3px;color:#1c1c1c;font-weight:400;transform-origin:100% 0;transform:scaleX(0.7740);">0.01</span>
<span class="t" style="left:470.30px;top:399.49px;font-size:12.3px;color:#1c1c1c;font-weight:400;transform-origin:0 0;transform:scaleX(0.8118);">audusd</span>
<span class="t" style="right:607.00px;top:399.49px;font-size:12.3px;color:#1c1c1c;font-weight:400;transform-origin:100% 0;transform:scaleX(0.7740);">0.68953</span>
<span class="t" style="right:517.50px;top:399.49px;font-size:12.3px;color:#1c1c1c;font-weight:400;transform-origin:100% 0;transform:scaleX(0.7740);">0.68673</span>
<span class="t" style="right:428.25px;top:399.49px;font-size:12.3px;color:#1c1c1c;font-weight:400;transform-origin:100% 0;transform:scaleX(0.7740);">0.69333</span>
<span class="t" style="right:339.25px;top:399.49px;font-size:12.3px;color:#1c1c1c;font-weight:400;transform-origin:100% 0;transform:scaleX(0.7740);">0.68952</span>
<span class="t" style="right:250.25px;top:399.49px;font-size:12.3px;color:#1c1c1c;font-weight:400;transform-origin:100% 0;transform:scaleX(0.7740);">0.00</span>
<span class="t" style="right:161.00px;top:399.49px;font-size:12.3px;color:#1c1c1c;font-weight:400;transform-origin:100% 0;transform:scaleX(0.7740);">0.00</span>
<span class="t" style="right:40.25px;top:399.49px;font-size:12.3px;color:#1c1c1c;font-weight:400;transform-origin:100% 0;transform:scaleX(0.7740);">-0.01</span>
<svg class="b" style="left:1167.5px;top:402.0px" width="9" height="9"><path d="M1.8 1.8l5 5M6.8 1.8l-5 5" stroke="#8a8a8a" stroke-width="1.1"/></svg>
<svg class="b" style="left:10px;top:416.6px" width="14" height="15" viewBox="0 0 14 15"><path d="M1.6 0.7h6.2l3.3 3.3v7.8a0.9 0.9 0 0 1-0.9 0.9h-8.6a0.9 0.9 0 0 1-0.9-0.9v-10.2a0.9 0.9 0 0 1 0.9-0.9z" fill="url(#pg)" stroke="#8a8a8a" stroke-width="0.9"/><path d="M7.8 0.9v3.1h3.2" fill="none" stroke="#4a4a4a" stroke-width="0.9"/><circle cx="9.9" cy="10.5" r="2.9" fill="#1b9bf0" stroke="#0b6fb8" stroke-width="0.6"/><circle cx="9.3" cy="9.7" r="1.1" fill="#62c4ff"/></svg>
<span class="t" style="left:27.30px;top:416.99px;font-size:12.3px;color:#1c1c1c;font-weight:400;transform-origin:0 0;transform:scaleX(0.7529);">99165967</span>
<span class="t" style="right:919.50px;top:416.99px;font-size:12.3px;color:#1c1c1c;font-weight:400;transform-origin:100% 0;transform:scaleX(0.7740);">2019.05.23 19:40:00</span>
<span class="t" style="left:344.05px;top:416.99px;font-size:12.3px;color:#1c1c1c;font-weight:400;transform-origin:0 0;transform:scaleX(0.8195);">buy</span>
<span class="t" style="right:777.00px;top:416.99px;font-size:12.3px;color:#1c1c1c;font-weight:400;transform-origin:100% 0;transform:scaleX(0.7740);">0.01</span>
<span class="t" style="left:470.30px;top:416.99px;font-size:12.3px;color:#1c1c1c;font-weight:400;transform-origin:0 0;transform:scaleX(0.8118);">audusd</span>
<span class="t" style="right:607.00px;top:416.99px;font-size:12.3px;color:#1c1c1c;font-weight:400;transform-origin:100% 0;transform:scaleX(0.7740);">0.69003</span>
<span class="t" style="right:517.50px;top:416.99px;font-size:12.3px;color:#1c1c1c;font-weight:400;transform-origin:100% 0;transform:scaleX(0.7740);">0.68723</span>
<span class="t" style="right:428.25px;top:416.99px;font-size:12.3px;color:#1c1c1c;font-weight:400;transform-origin:100% 0;transform:scaleX(0.7740);">0.69383</span>
<span class="t" style="right:339.25px;top:416.99px;font-size:12.3px;color:#1c1c1c;font-weight:400;transform-origin:100% 0;transform:scaleX(0.7740);">0.68952</span>
<span class="t" style="right:250.25px;top:416.99px;font-size:12.3px;color:#1c1c1c;font-weight:400;transform-origin:100% 0;transform:scaleX(0.7740);">0.00</span>
<span class="t" style="right:161.00px;top:416.99px;font-size:12.3px;color:#1c1c1c;font-weight:400;transform-origin:100% 0;transform:scaleX(0.7740);">0.00</span>
<span class="t" style="right:40.25px;top:416.99px;font-size:12.3px;color:#1c1c1c;font-weight:400;transform-origin:100% 0;transform:scaleX(0.7740);">-0.51</span>
<svg class="b" style="left:1167.5px;top:419.5px" width="9" height="9"><path d="M1.8 1.8l5 5M6.8 1.8l-5 5" stroke="#8a8a8a" stroke-width="1.1"/></svg>
<svg class="b" style="left:10.4px;top:434.6px" width="11" height="13" viewBox="0 0 11 13"><rect x="0.6" y="0.8" width="9.4" height="11" rx="1.2" fill="#fff" stroke="#8a8a8a" stroke-width="0.9"/><path d="M5.3 2.8l3.3 3.6h-1.9v3.2h-2.8v-3.2h-1.9z" fill="#18a818"/><path d="M5.3 4.6l1.2 1.6h-0.7v2.2h-1v-2.2h-0.7z" fill="#8fe88f"/></svg>
<span class="t" style="left:28.20px;top:434.49px;font-size:12.3px;color:#141414;font-weight:700;transform-origin:0 0;transform:scaleX(0.8163);">Баланс: 3 337.91 USD</span>
<span class="t" style="left:140.00px;top:434.49px;font-size:12.3px;color:#141414;font-weight:700;transform-origin:0 0;transform:scaleX(0.8230);">Средства: 3 340.00</span>
<span class="t" style="left:240.00px;top:434.49px;font-size:12.3px;color:#141414;font-weight:700;transform-origin:0 0;transform:scaleX(0.8364);">Маржа: 9.35</span>
<span class="t" style="left:307.00px;top:434.49px;font-size:12.3px;color:#141414;font-weight:700;transform-origin:0 0;transform:scaleX(0.8303);">Свободная маржа: 3 330.65</span>
<span class="t" style="left:450.50px;top:434.49px;font-size:12.3px;color:#141414;font-weight:700;transform-origin:0 0;transform:scaleX(0.8467);">Уровень: 35725.98%</span>
<span class="t" style="right:40.25px;top:434.49px;font-size:12.3px;color:#141414;font-weight:700;transform-origin:100% 0;transform:scaleX(0.7740);">2.09</span>
<svg class="b" style="left:10px;top:451.6px" width="14" height="15" viewBox="0 0 14 15"><path d="M1.6 0.7h6.2l3.3 3.3v7.8a0.9 0.9 0 0 1-0.9 0.9h-8.6a0.9 0.9 0 0 1-0.9-0.9v-10.2a0.9 0.9 0 0 1 0.9-0.9z" fill="url(#pg)" stroke="#8a8a8a" stroke-width="0.9"/><path d="M7.8 0.9v3.1h3.2" fill="none" stroke="#4a4a4a" stroke-width="0.9"/><circle cx="9.9" cy="10.5" r="2.9" fill="#1b9bf0" stroke="#0b6fb8" stroke-width="0.6"/><circle cx="9.3" cy="9.7" r="1.1" fill="#62c4ff"/></svg>
<span class="t" style="left:27.30px;top:451.99px;font-size:12.3px;color:#1c1c1c;font-weight:400;transform-origin:0 0;transform:scaleX(0.7529);">99165292</span>
<span class="t" style="right:919.50px;top:451.99px;font-size:12.3px;color:#1c1c1c;font-weight:400;transform-origin:100% 0;transform:scaleX(0.7740);">2019.05.23 16:53:17</span>
<span class="t" style="left:321.20px;top:451.99px;font-size:12.3px;color:#1c1c1c;font-weight:400;transform-origin:0 0;transform:scaleX(0.8409);">buy stop</span>
<span class="t" style="right:777.00px;top:451.99px;font-size:12.3px;color:#1c1c1c;font-weight:400;transform-origin:100% 0;transform:scaleX(0.7740);">0.01</span>
<span class="t" style="left:470.30px;top:451.99px;font-size:12.3px;color:#1c1c1c;font-weight:400;transform-origin:0 0;transform:scaleX(0.8258);">nzdusd</span>
<span class="t" style="right:607.00px;top:451.99px;font-size:12.3px;color:#1c1c1c;font-weight:400;transform-origin:100% 0;transform:scaleX(0.7740);">0.65272</span>
<span class="t" style="right:517.50px;top:451.99px;font-size:12.3px;color:#1c1c1c;font-weight:400;transform-origin:100% 0;transform:scaleX(0.7740);">0.64992</span>
<span class="t" style="right:428.25px;top:451.99px;font-size:12.3px;color:#1c1c1c;font-weight:400;transform-origin:100% 0;transform:scaleX(0.7740);">0.65652</span>
<span class="t" style="right:339.25px;top:451.99px;font-size:12.3px;color:#1c1c1c;font-weight:400;transform-origin:100% 0;transform:scaleX(0.7740);">0.65213</span>
<svg class="b" style="left:1167.5px;top:454.5px" width="9" height="9"><path d="M1.8 1.8l5 5M6.8 1.8l-5 5" stroke="#8a8a8a" stroke-width="1.1"/></svg>
<svg class="b" style="left:10px;top:469.1px" width="14" height="15" viewBox="0 0 14 15"><path d="M1.6 0.7h6.2l3.3 3.3v7.8a0.9 0.9 0 0 1-0.9 0.9h-8.6a0.9 0.9 0 0 1-0.9-0.9v-10.2a0.9 0.9 0 0 1 0.9-0.9z" fill="url(#pg)" stroke="#8a8a8a" stroke-width="0.9"/><path d="M7.8 0.9v3.1h3.2" fill="none" stroke="#4a4a4a" stroke-width="0.9"/><circle cx="9.9" cy="10.5" r="2.9" fill="#1b9bf0" stroke="#0b6fb8" stroke-width="0.6"/><circle cx="9.3" cy="9.7" r="1.1" fill="#62c4ff"/></svg>
<span class="t" style="left:27.30px;top:469.49px;font-size:12.3px;color:#1c1c1c;font-weight:400;transform-origin:0 0;transform:scaleX(0.7529);">99165980</span>
<span class="t" style="right:919.50px;top:469.49px;font-size:12.3px;color:#1c1c1c;font-weight:400;transform-origin:100% 0;transform:scaleX(0.7740);">2019.05.23 17:03:15</span>
<span class="t" style="left:321.20px;top:469.49px;font-size:12.3px;color:#1c1c1c;font-weight:400;transform-origin:0 0;transform:scaleX(0.8409);">buy stop</span>
<span class="t" style="right:777.00px;top:469.49px;font-size:12.3px;color:#1c1c1c;font-weight:400;transform-origin:100% 0;transform:scaleX(0.7740);">0.01</span>
<span class="t" style="left:470.30px;top:469.49px;font-size:12.3px;color:#1c1c1c;font-weight:400;transform-origin:0 0;transform:scaleX(0.8118);">audusd</span>
<span class="t" style="right:607.00px;top:469.49px;font-size:12.3px;color:#1c1c1c;font-weight:400;transform-origin:100% 0;transform:scaleX(0.7740);">0.69053</span>
<span class="t" style="right:517.50px;top:469.49px;font-size:12.3px;color:#1c1c1c;font-weight:400;transform-origin:100% 0;transform:scaleX(0.7740);">0.68773</span>
<span class="t" style="right:428.25px;top:469.49px;font-size:12.3px;color:#1c1c1c;font-weight:400;transform-origin:100% 0;transform:scaleX(0.7740);">0.69433</span>
<span class="t" style="right:339.25px;top:469.49px;font-size:12.3px;color:#1c1c1c;font-weight:400;transform-origin:100% 0;transform:scaleX(0.7740);">0.68960</span>
<svg class="b" style="left:1167.5px;top:472.0px" width="9" height="9"><path d="M1.8 1.8l5 5M6.8 1.8l-5 5" stroke="#8a8a8a" stroke-width="1.1"/></svg>
<svg class="b" style="left:10px;top:487.0px" width="14" height="15" viewBox="0 0 14 15"><path d="M1.6 0.7h6.2l3.3 3.3v7.8a0.9 0.9 0 0 1-0.9 0.9h-8.6a0.9 0.9 0 0 1-0.9-0.9v-10.2a0.9 0.9 0 0 1 0.9-0.9z" fill="url(#pg)" stroke="#8a8a8a" stroke-width="0.9"/><path d="M7.8 0.9v3.1h3.2" fill="none" stroke="#4a4a4a" stroke-width="0.9"/><circle cx="9.9" cy="10.5" r="2.9" fill="#1b9bf0" stroke="#0b6fb8" stroke-width="0.6"/><circle cx="9.3" cy="9.7" r="1.1" fill="#62c4ff"/></svg>
<span class="t" style="left:27.30px;top:487.39px;font-size:12.3px;color:#1c1c1c;font-weight:400;transform-origin:0 0;transform:scaleX(0.7529);">99165985</span>
<span class="t" style="right:919.50px;top:487.39px;font-size:12.3px;color:#1c1c1c;font-weight:400;transform-origin:100% 0;transform:scaleX(0.7740);">2019.05.23 17:03:20</span>
<span class="t" style="left:321.20px;top:487.39px;font-size:12.3px;color:#1c1c1c;font-weight:400;transform-origin:0 0;transform:scaleX(0.8409);">buy stop</span>
<span class="t" style="right:777.00px;top:487.39px;font-size:12.3px;color:#1c1c1c;font-weight:400;transform-origin:100% 0;transform:scaleX(0.7740);">0.01</span>
<span class="t" style="left:470.30px;top:487.39px;font-size:12.3px;color:#1c1c1c;font-weight:400;transform-origin:0 0;transform:scaleX(0.8118);">audusd</span>
<span class="t" style="right:607.00px;top:487.39px;font-size:12.3px;color:#1c1c1c;font-weight:400;transform-origin:100% 0;transform:scaleX(0.7740);">0.69103</span>
<span class="t" style="right:517.50px;top:487.39px;font-size:12.3px;color:#1c1c1c;font-weight:400;transform-origin:100% 0;transform:scaleX(0.7740);">0.68823</span>
<span class="t" style="right:428.25px;top:487.39px;font-size:12.3px;color:#1c1c1c;font-weight:400;transform-origin:100% 0;transform:scaleX(0.7740);">0.69483</span>
<span class="t" style="right:339.25px;top:487.39px;font-size:12.3px;color:#1c1c1c;font-weight:400;transform-origin:100% 0;transform:scaleX(0.7740);">0.68960</span>
<svg class="b" style="left:1167.5px;top:489.9px" width="9" height="9"><path d="M1.8 1.8l5 5M6.8 1.8l-5 5" stroke="#8a8a8a" stroke-width="1.1"/></svg>
<div class="b" style="left:1181.3px;top:358.0px;width:15.0px;height:155.3px;background:#f0f0f0"></div>
<div class="b" style="left:1182.4px;top:419.6px;width:13.2px;height:78.2px;background:#c2c2c2"></div>
<svg class="b" style="left:1183px;top:361px" width="12" height="10"><path d="M2.7 7.0l3.2-3.3 3.2 3.3" stroke="#3a3a3a" stroke-width="1.7" fill="none"/></svg>
<svg class="b" style="left:1183px;top:500.6px" width="12" height="10"><path d="M2.7 3.6l3.2 3.3 3.2-3.3" stroke="#3a3a3a" stroke-width="1.7" fill="none"/></svg>
<div class="b" style="left:7.5px;top:512.8px;width:1188.8px;height:1.2px;background:#2e2e2e"></div>
<div class="b" style="left:9.6px;top:512.7px;width:61.6px;height:17.4px;background:#fff;border:1.2px solid #2a2a2a;border-top:none"></div>
<span class="t" style="left:19.20px;top:516.06px;font-size:12.1px;color:#111;font-weight:400;transform-origin:0 0;transform:scaleX(0.8886);">Торговля</span>
<span class="t" style="left:82.80px;top:516.06px;font-size:12.1px;color:#666;font-weight:400;transform-origin:0 0;transform:scaleX(0.8581);">Активы</span>
<span class="t" style="left:136.60px;top:516.06px;font-size:12.1px;color:#666;font-weight:400;transform-origin:0 0;transform:scaleX(0.8502);">История Счета</span>
<span class="t" style="left:226.60px;top:516.06px;font-size:12.1px;color:#666;font-weight:400;transform-origin:0 0;transform:scaleX(0.8670);">Новости</span>
<span class="t" style="left:296.60px;top:516.06px;font-size:12.1px;color:#666;font-weight:400;transform-origin:0 0;transform:scaleX(0.8367);">Алерты</span>
<span class="t" style="left:350.80px;top:516.06px;font-size:12.1px;color:#666;font-weight:400;transform-origin:0 0;transform:scaleX(0.8603);">Почта</span>
<span class="t" style="left:409.60px;top:516.06px;font-size:12.1px;color:#666;font-weight:400;transform-origin:0 0;transform:scaleX(0.8375);">Маркет</span>
<span class="t" style="left:478.30px;top:516.06px;font-size:12.1px;color:#666;font-weight:400;transform-origin:0 0;transform:scaleX(0.8540);">Сигналы</span>
<span class="t" style="left:539.10px;top:516.06px;font-size:12.1px;color:#666;font-weight:400;transform-origin:0 0;transform:scaleX(0.8112);">Статьи</span>
<span class="t" style="left:589.60px;top:516.06px;font-size:12.1px;color:#666;font-weight:400;transform-origin:0 0;transform:scaleX(0.8485);">Библиотека</span>
<span class="t" style="left:664.10px;top:516.06px;font-size:12.1px;color:#666;font-weight:400;transform-origin:0 0;transform:scaleX(0.8515);">Эксперты</span>
<span class="t" style="left:729.10px;top:516.06px;font-size:12.1px;color:#666;font-weight:400;transform-origin:0 0;transform:scaleX(0.8518);">Журнал</span>
<span class="t" style="left:269.50px;top:522.12px;font-size:8.6px;color:#e81818;font-weight:700;transform-origin:0 0;transform:scaleX(0.8366);">62</span>
<span class="t" style="left:382.50px;top:522.12px;font-size:8.6px;color:#e81818;font-weight:700;transform-origin:0 0;transform:scaleX(0.9098);">50</span>
<span class="t" style="left:446.80px;top:522.12px;font-size:8.6px;color:#e81818;font-weight:700;transform-origin:0 0;transform:scaleX(0.9203);">149</span>
<div class="b" style="left:127.00px;top:516.5px;width:1px;height:12px;background:#555"></div>
<div class="b" style="left:217.00px;top:516.5px;width:1px;height:12px;background:#555"></div>
<div class="b" style="left:287.00px;top:516.5px;width:1px;height:12px;background:#555"></div>
<div class="b" style="left:342.00px;top:516.5px;width:1px;height:12px;background:#555"></div>
<div class="b" style="left:400.00px;top:516.5px;width:1px;height:12px;background:#555"></div>
<div class="b" style="left:468.75px;top:516.5px;width:1px;height:12px;background:#555"></div>
<div class="b" style="left:530.00px;top:516.5px;width:1px;height:12px;background:#555"></div>
<div class="b" style="left:580.00px;top:516.5px;width:1px;height:12px;background:#555"></div>
<div class="b" style="left:655.00px;top:516.5px;width:1px;height:12px;background:#555"></div>
<div class="b" style="left:719.50px;top:516.5px;width:1px;height:12px;background:#555"></div>
<div class="b" style="left:775.75px;top:516.5px;width:1px;height:12px;background:#555"></div>
<div class="b" style="left:0;top:534.6px;width:1200px;height:1px;background:#dcdcdc"></div>
<div class="b" style="left:0;top:535.6px;width:1200px;height:3px;background:#f6f6f6"></div>
<div class="b" style="left:1197.9px;top:0;width:0.8px;height:538px;background:#cfcfcf"></div>
<div class="b" style="left:1198.6px;top:0;width:1.4px;height:538px;background:#f8f8f8"></div>
<span class="t" style="left:883.90px;top:473.67px;font-size:17.4px;color:rgba(118,118,118,0.5);font-weight:400;transform-origin:0 0;transform:scaleX(1.0064);">Активация Windows</span>
<span class="t" style="left:883.90px;top:496.03px;font-size:13.2px;color:rgba(118,118,118,0.5);font-weight:400;transform-origin:0 0;transform:scaleX(0.9989);">Чтобы активировать Windows, перейдите в</span>
<span class="t" style="left:883.90px;top:513.03px;font-size:13.2px;color:rgba(118,118,118,0.5);font-weight:400;transform-origin:0 0;transform:scaleX(1.0026);">раздел "Параметры".</span>
</body></html>
